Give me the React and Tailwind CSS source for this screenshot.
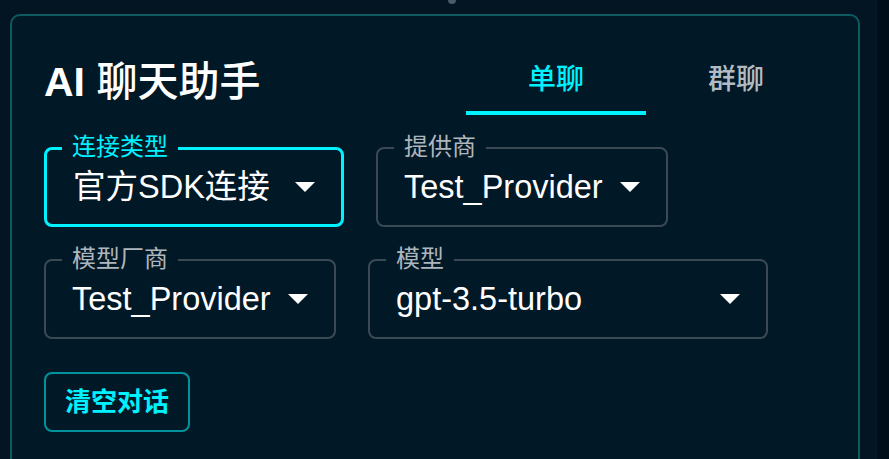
import React from "react";

const FONT = { fontFamily: '"Liberation Sans", "Noto Sans CJK SC", sans-serif' };

function Arrow() {
  return (
    <svg width="20" height="10" viewBox="0 0 20 10" className="shrink-0">
      <path d="M0 0 L20 0 L10 10 Z" fill="#ffffff" />
    </svg>
  );
}

function Field({ label, value, width, focused }) {
  return (
    <div
      className={
        "relative h-[80px] flex items-center justify-between pl-[26px] pr-[26px] rounded-[8px] " +
        (focused ? "border-[3px] border-[#00f2ff]" : "border-2 border-[#3b4955]")
      }
      style={{ width }}
    >
      <span
        className={
          "absolute h-[24px] leading-[24px] text-[24px] px-[10px] bg-[#011827] whitespace-nowrap " +
          (focused ? "left-[15px] top-[-15px] text-[#00f2ff]" : "left-[16px] top-[-14px] text-[#aeb6bd]")
        }
      >
        {label}
      </span>
      <span className="text-[32.5px] leading-[40px] text-white whitespace-nowrap">{value}</span>
      <Arrow />
    </div>
  );
}

export default function App() {
  return (
    <div className="h-[459px] w-[889px] overflow-hidden flex bg-[#031321]" style={FONT}>
      <div className="relative flex-1 bg-[#031422]">
        <div className="absolute left-[448px] top-[-4px] w-[8px] h-[8px] rounded-full bg-[#4d5a68]" />
        <div className="mt-[14px] ml-[10px] w-[850px] h-[480px] border-2 border-[#0d5b5f] rounded-[10px] bg-[#011827] pl-[32px] pr-[32px] pt-[33px]">
          <div className="flex items-center justify-between h-[66px]">
            <h1 className="text-[41px] leading-[48px] font-medium text-white whitespace-nowrap">
              <span className="font-bold">AI</span> 聊天助手
            </h1>
            <div className="flex h-[66px]">
              <div className="w-[180px] flex flex-col">
                <div className="flex-1 flex items-center justify-center text-[28px] font-medium text-[#00f2ff]">单聊</div>
                <div className="h-[4px] bg-[#00f2ff]" />
              </div>
              <div className="w-[180px] flex flex-col">
                <div className="flex-1 flex items-center justify-center text-[28px] font-medium text-[#b3bbc2]">群聊</div>
                <div className="h-[4px]" />
              </div>
            </div>
          </div>
          <div className="mt-[32px] flex gap-[32px]">
            <Field label="连接类型" value="官方SDK连接" width={300} focused />
            <Field label="提供商" value="Test_Provider" width={292} />
          </div>
          <div className="mt-[32px] flex gap-[32px]">
            <Field label="模型厂商" value="Test_Provider" width={292} />
            <Field label="模型" value="gpt-3.5-turbo" width={400} />
          </div>
          <button className="mt-[33px] w-[146px] h-[60px] border-2 border-[#00939c] rounded-[8px] flex items-center justify-center text-[26px] font-bold text-[#00f2ff]">
            清空对话
          </button>
        </div>
      </div>
      <div className="w-[13px] bg-[#000e1a] border-l border-[#001a2e]" />
    </div>
  );
}
